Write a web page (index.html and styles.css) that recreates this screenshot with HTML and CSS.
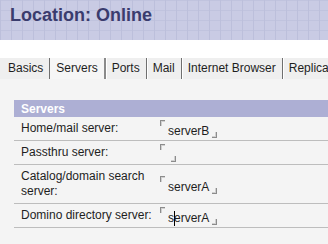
FILE: index.html
```html
<!DOCTYPE html>
<html>
<head>
    <title>Location: Online</title>
    <meta charset="utf-8">
    <link rel="stylesheet" href="styles.css">
</head>

<body>

    <div class="header">
        <h1 class="title">Location: Online</h1>
    </div>

    <div class="tabs">
        <span class="tab">Basics</span>
        <span class="tab tab-active">Servers</span>
        <span class="tab">Ports</span>
        <span class="tab">Mail</span>
        <span class="tab">Internet Browser</span>
        <span class="tab">Replica</span>
    </div>

    <div class="panel">
        <div class="section">
            <div class="section-head">Servers</div>
            <table class="fields">
                <tr>
                    <td class="label">Home/mail server:</td>
                    <td class="value"><span class="field"><i class="mark-l"></i><span class="val">serverB</span><i class="mark-r"></i></span></td>
                </tr>
                <tr>
                    <td class="label">Passthru server:</td>
                    <td class="value"><span class="field"><i class="mark-l"></i><span class="val"></span><i class="mark-r"></i></span></td>
                </tr>
                <tr>
                    <td class="label">Catalog/domain search server:</td>
                    <td class="value"><span class="field"><i class="mark-l"></i><span class="val">serverA</span><i class="mark-r"></i></span></td>
                </tr>
                <tr>
                    <td class="label">Domino directory server:</td>
                    <td class="value"><span class="field"><i class="mark-l"></i><span class="val">s<b class="caret"></b>erverA</span><i class="mark-r"></i></span></td>
                </tr>
            </table>
        </div>
    </div>

</body>
</html>
```

FILE: styles.css
```css
body {
    margin: 0;
    font-family: "Liberation Sans", Arial, sans-serif;
    font-size: 12px;
    color: #1e1e1e;
    background-color: white;
}

.header {
    height: 40px;
    background-color: #c9cbe4;
    background-image:
        repeating-linear-gradient(to right, #bcbfdb 0, #bcbfdb 1px, transparent 1px, transparent 11px),
        repeating-linear-gradient(to bottom, #c0c3de 0, #c0c3de 1px, transparent 1px, transparent 10px);
}

.title {
    margin: 0;
    padding: 5px 0 0 10px;
    font-size: 18px;
    line-height: 21px;
    font-weight: bold;
    color: #3a3c6e;
}

.tabs {
    display: flex;
    margin-top: 18px;
    padding-left: 2px;
    background-color: #efefef;
    white-space: nowrap;
    overflow: hidden;
}

.tab {
    flex-shrink: 0;
    padding: 3px 6px 4px 6px;
    line-height: 14px;
    border-right: 1px solid #6f6f6f;
    box-shadow: 1px 0 0 white;
}

.tab:last-child {
    border-right: none;
    box-shadow: none;
}

.tab-active {
    background-color: #f6f6f6;
    border-right: 2px solid #8a8a8a;
}

.panel {
    background-color: #f4f4f4;
    padding: 21px 0 16px 14px;
}

.section-head {
    background-color: #adafd4;
    color: white;
    font-weight: bold;
    line-height: 14px;
    padding: 2px 7px 1px 7px;
}

.fields {
    width: 100%;
    border-collapse: collapse;
}

.fields td {
    border-bottom: 1px solid #bdbdbd;
    line-height: 15px;
    vertical-align: middle;
}

.label {
    width: 139px;
    padding: 4px 0 4px 7px;
}

.value {
    padding: 2px 0 1px 0;
}

.field {
    display: flex;
    align-items: flex-start;
    height: 20px;
}

.mark-l {
    width: 4px;
    height: 5px;
    margin-top: 1px;
    border-top: 1px solid #8c8c8c;
    border-left: 1px solid #8c8c8c;
    box-shadow: inset 1px 1px 0 #d0d0d0;
}

.val {
    margin: 5px 3px 0 3px;
    line-height: 15px;
}

.mark-r {
    align-self: flex-end;
    width: 4px;
    height: 5px;
    margin-bottom: 1px;
    border-bottom: 1px solid #8c8c8c;
    border-right: 1px solid #8c8c8c;
    box-shadow: inset -1px -1px 0 #d0d0d0;
}

.caret {
    display: inline-block;
    width: 0;
    height: 15px;
    margin-right: -1px;
    border-left: 1px solid black;
    vertical-align: -4px;
}
```
